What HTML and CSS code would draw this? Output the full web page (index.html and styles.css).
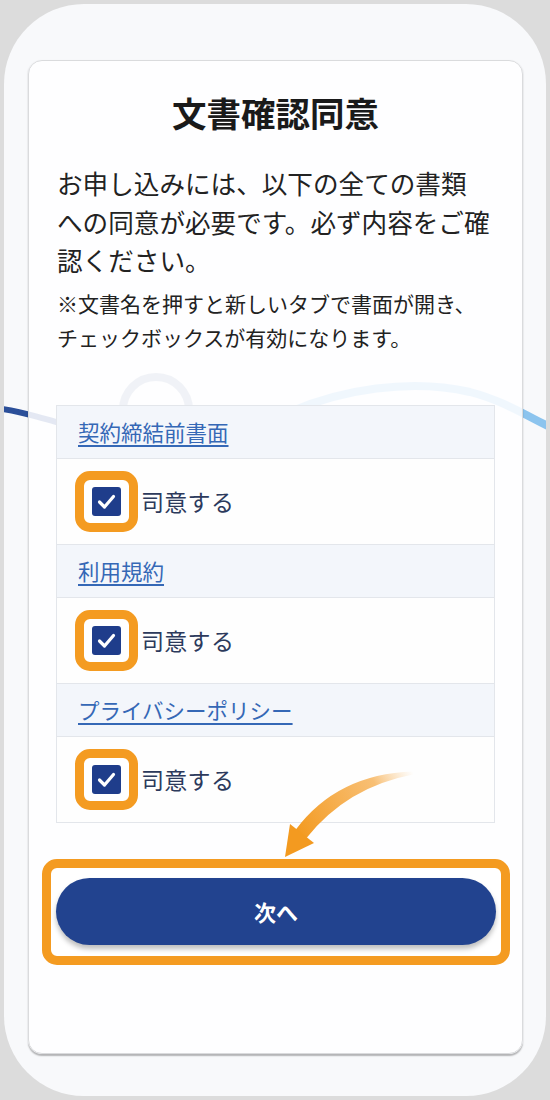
FILE: index.html
```html
<!DOCTYPE html>
<html lang="ja">
<head>
<meta charset="utf-8">
<title>文書確認同意</title>
<link rel="stylesheet" href="styles.css">
</head>
<body>
<div class="frame">
  <svg class="deco" viewBox="4 4 542 1092" width="542" height="1092" aria-hidden="true">
    <circle cx="156" cy="410" r="33" fill="none" stroke="#8f9fb8" stroke-width="8"/>
    <path d="M-5,408 C20,411 50,420 90,432" fill="none" stroke="#2b4f99" stroke-width="6"/>
    <path d="M290,412 C340,390 410,378 470,392 C505,401 530,418 560,432" fill="none" stroke="#8cc4ee" stroke-width="8"/>
  </svg>
  <main class="card">
    <h1 class="title">文書確認同意</h1>
    <p class="lead">お申し込みには、以下の全ての書類<br>への同意が必要です。必ず内容をご確<br>認ください。</p>
    <p class="note">※文書名を押すと新しいタブで書面が開き、<br>チェックボックスが有効になります。</p>

    <div class="docs">
      <div class="doc-head"><a class="doc-link" href="#">契約締結前書面</a></div>
      <div class="doc-agree">
        <span class="mark"><span class="check"><svg viewBox="0 0 29 29" width="29" height="29"><polyline points="7.5,15 12.5,20 21.5,9.5" fill="none" stroke="#fff" stroke-width="3.2" stroke-linecap="round" stroke-linejoin="round"/></svg></span></span>
        <span class="agree-label">司意する</span>
      </div>
      <div class="doc-head"><a class="doc-link" href="#">利用規約</a></div>
      <div class="doc-agree">
        <span class="mark"><span class="check"><svg viewBox="0 0 29 29" width="29" height="29"><polyline points="7.5,15 12.5,20 21.5,9.5" fill="none" stroke="#fff" stroke-width="3.2" stroke-linecap="round" stroke-linejoin="round"/></svg></span></span>
        <span class="agree-label">司意する</span>
      </div>
      <div class="doc-head"><a class="doc-link" href="#">プライバシーポリシー</a></div>
      <div class="doc-agree last">
        <span class="mark"><span class="check"><svg viewBox="0 0 29 29" width="29" height="29"><polyline points="7.5,15 12.5,20 21.5,9.5" fill="none" stroke="#fff" stroke-width="3.2" stroke-linecap="round" stroke-linejoin="round"/></svg></span></span>
        <span class="agree-label">司意する</span>
      </div>
    </div>

    <div class="next-mark">
      <button class="next-btn" type="button">次へ</button>
    </div>

    <svg class="arrow" viewBox="28 60 495 993" width="495" height="993" aria-hidden="true">
      <defs>
        <linearGradient id="ag" gradientUnits="userSpaceOnUse" x1="413" y1="772" x2="300" y2="836">
          <stop offset="0" stop-color="#f9c98a" stop-opacity="0"/>
          <stop offset="0.3" stop-color="#f7b45c" stop-opacity="0.85"/>
          <stop offset="1" stop-color="#f39a20"/>
        </linearGradient>
      </defs>
      <path d="M413,771.5 Q337,774 295.5,830 L306.5,838 Q347,787 413,774.5 Z" fill="url(#ag)"/>
      <polygon points="285,857 290,824 314,843" fill="#f39a20"/>
    </svg>
  </main>
</div>
</body>
</html>
```

FILE: styles.css
```css
* {
  box-sizing: border-box;
}

html, body {
  margin: 0;
  padding: 0;
}

body {
  width: 550px;
  height: 1100px;
  background: #dcdcdc;
  font-family: "Noto Sans CJK JP", "Noto Sans", sans-serif;
  color: #222;
  overflow: hidden;
}

.frame {
  position: relative;
  width: 542px;
  height: 1092px;
  margin: 4px;
  border-radius: 80px;
  background: #f8f9fb;
  overflow: hidden;
  padding: 56px 0 0 24px;
}

.deco {
  position: absolute;
  left: 0;
  top: 0;
}

.card {
  position: relative;
  z-index: 1;
  width: 495px;
  height: 994px;
  background: rgba(254, 254, 255, 0.88);
  border: 1px solid #dadbdd;
  border-radius: 14px;
  box-shadow: 0 1.5px 1.5px rgba(0, 0, 0, 0.28);
  padding: 31px 27px 0 27px;
}

.title {
  margin: 0;
  font-size: 34.5px;
  line-height: 40px;
  font-weight: 700;
  text-align: center;
  color: #1a1a1a;
}

.lead {
  margin: 32px 0 0;
  padding-left: 1px;
  font-size: 25.6px;
  line-height: 38.5px;
  color: #222;
  white-space: nowrap;
}

.note {
  margin: 6px 0 0;
  padding-left: 1px;
  font-size: 21px;
  line-height: 34px;
  color: #222;
  white-space: nowrap;
}

.docs {
  margin-top: 51px;
  border: 1px solid #e3e6eb;
  display: flex;
  flex-direction: column;
}

.doc-head {
  height: 53px;
  display: flex;
  align-items: center;
  padding-left: 21px;
  background: #f3f6fb;
  border-bottom: 1px solid #e3e6eb;
}

.doc-link {
  font-size: 21.5px;
  line-height: 1;
  color: #3568b6;
  text-decoration: underline;
  text-underline-offset: 4px;
  text-decoration-thickness: 1.5px;
}

.doc-agree {
  height: 86px;
  display: flex;
  align-items: center;
  padding-left: 18px;
  background: #fefefe;
  border-bottom: 1px solid #e3e6eb;
}

.doc-agree.last {
  height: 85px;
  border-bottom: none;
}

.mark {
  width: 63px;
  height: 61px;
  border: 9px solid #f49b21;
  border-radius: 15px;
  background: #fff;
  display: flex;
  align-items: center;
  justify-content: center;
}

.check {
  width: 29px;
  height: 29px;
  border-radius: 3px;
  background: #1f3d8b;
  display: flex;
}

.agree-label {
  margin-left: 3px;
  font-size: 23px;
  line-height: 1;
  color: #2c3a5c;
  letter-spacing: 0.3px;
}

.next-mark {
  margin: 36px -15px 0 -14px;
  border: 9px solid #f49b21;
  border-radius: 15px;
  background: #fff;
  padding: 10px 5px 11px 5px;
}

.next-btn {
  display: block;
  width: 100%;
  height: 67px;
  border: none;
  border-radius: 34px;
  background: #22438f;
  color: #fff;
  font-family: "Noto Sans CJK JP", "Noto Sans", sans-serif;
  font-size: 22px;
  font-weight: 700;
  box-shadow: 0 4px 5px rgba(0, 0, 0, 0.25);
}

.arrow {
  position: absolute;
  left: -1px;
  top: -1px;
  pointer-events: none;
}
```
